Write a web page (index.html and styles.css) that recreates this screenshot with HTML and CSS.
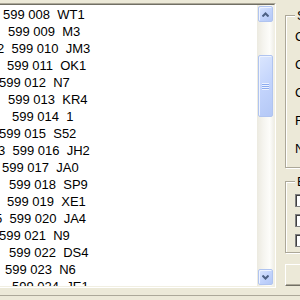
FILE: index.html
```html
<!DOCTYPE html>
<html lang="en">
<head>
  <meta charset="UTF-8">
  <title>Log viewer</title>
  <link rel="stylesheet" href="styles.css">
</head>
<body>
  <div class="window">
    <div class="main">
      <div class="listbox">
        <div class="listbox-inner">
          <div class="rows">
            <div class="row off-3">599 008  WT1</div>
            <div class="row off-8">599 009  M3</div>
            <div class="row off-n3">2  599 010  JM3</div>
            <div class="row off-7">599 011  OK1</div>
            <div class="row off-n1">599 012  N7</div>
            <div class="row off-8">599 013  KR4</div>
            <div class="row off-12">599 014  1</div>
            <div class="row off-n1">599 015  S52</div>
            <div class="row off-n2">3  599 016  JH2</div>
            <div class="row off-2">599 017  JA0</div>
            <div class="row off-9">599 018  SP9</div>
            <div class="row off-7">599 019  XE1</div>
            <div class="row off-n5">5  599 020  JA4</div>
            <div class="row off-n1">599 021  N9</div>
            <div class="row off-9">599 022  DS4</div>
            <div class="row off-5">599 023  N6</div>
            <div class="row off-12">599 024  JE1</div>
          </div>
          <div class="vscroll">
            <div class="sb-btn">
              <svg width="7" height="5" viewBox="0 0 7 5"><polyline points="0.5,4.5 3.5,1.5 6.5,4.5" fill="none" stroke="#4d6185" stroke-width="2"/></svg>
            </div>
            <div class="sb-thumb"><span class="grip"></span></div>
            <div class="sb-btn sb-down">
              <svg width="7" height="5" viewBox="0 0 7 5"><polyline points="0.5,0.5 3.5,3.5 6.5,0.5" fill="none" stroke="#4d6185" stroke-width="2"/></svg>
            </div>
          </div>
        </div>
      </div>

      <div class="side">
        <fieldset class="group">
          <legend>Search</legend>
          <div class="field">Call</div>
          <div class="field">Country</div>
          <div class="field">Continent</div>
          <div class="field">Frequency</div>
          <div class="field">Name</div>
        </fieldset>
        <fieldset class="group group-export">
          <legend>Export</legend>
          <label class="check"><span class="box"></span>ADIF</label>
          <label class="check"><span class="box"></span>Cabrillo</label>
          <label class="check"><span class="box"></span>CSV</label>
        </fieldset>
        <button class="btn">Save</button>
      </div>
    </div>
    <div class="status"></div>
  </div>
</body>
</html>
```

FILE: styles.css
```css
* {
  margin: 0;
  padding: 0;
  box-sizing: border-box;
}

html,
body {
  overflow: hidden;
}

body {
  font-family: 'Liberation Sans', Arial, sans-serif;
  font-size: 13px;
  color: #000;
  background: #ece9d8;
}

.window {
  width: 300px;
  height: 300px;
  overflow: hidden;
}

.main {
  display: flex;
  align-items: flex-start;
  height: 288px;
}

/* list box, left edge scrolled off screen */
.listbox {
  flex-shrink: 0;
  width: 278px;
  height: 285px;
  margin-top: 3px;
  margin-left: -2px;
  border: 1px solid;
  border-color: #aca899 #fff #fff #aca899;
}

.listbox-inner {
  display: flex;
  height: 100%;
  border: 1px solid;
  border-color: #716f64 #f1efe2 #f1efe2 #716f64;
}

.rows {
  flex: 1;
  overflow: hidden;
  background: #fff;
  padding-top: 1px;
}

.row {
  height: 17px;
  line-height: 17px;
  white-space: pre;
}

/* horizontal offset of each line (hidden leading column) */
.off-n5 { text-indent: -5px; }
.off-n3 { text-indent: -3px; }
.off-n2 { text-indent: -2px; }
.off-n1 { text-indent: -1px; }
.off-2 { text-indent: 2px; }
.off-3 { text-indent: 3px; }
.off-5 { text-indent: 5px; }
.off-7 { text-indent: 7px; }
.off-8 { text-indent: 8px; }
.off-9 { text-indent: 9px; }
.off-12 { text-indent: 12px; }

/* XP style scroll bar */
.vscroll {
  width: 17px;
  display: flex;
  flex-direction: column;
  background: linear-gradient(to right, #eceae0, #f6f5f0 40%, #fdfdfa 75%, #efeee7);
}

.sb-btn,
.sb-thumb {
  margin: 1px 0 0 1px;
  width: 15px;
  border: 1px solid #b0c4f0;
  border-radius: 2px;
  background: linear-gradient(135deg, #dbe6fe, #c3d4fc 50%, #b4c8f6);
  box-shadow: inset 1px 1px 0 #eef3fe;
}

.sb-btn {
  height: 16px;
  display: flex;
  align-items: center;
  justify-content: center;
}

.sb-thumb {
  height: 62px;
  margin-top: 33px;
  display: flex;
  align-items: center;
  justify-content: center;
}

.grip {
  display: block;
  width: 7px;
  height: 7px;
  background: repeating-linear-gradient(to bottom, #eef3fe 0 1px, #8cacf0 1px 2px);
}

.sb-down {
  margin-top: auto;
  margin-bottom: 1px;
}

/* right hand panel */
.side {
  flex-shrink: 0;
  width: 160px;
  margin-left: 9px;
  padding-top: 8px;
  display: flex;
  flex-direction: column;
  align-items: flex-start;
}

.group {
  width: 150px;
  margin: 0;
  padding: 0 0 4px 9px;
  border: 1px solid #aca899;
  box-shadow: inset 1px 1px 0 #fff, 1px 1px 0 #fff;
  min-inline-size: 0;
}

.group legend {
  padding: 0 2px;
  line-height: 15px;
  background: #ece9d8;
}

.field {
  height: 28px;
  line-height: 28px;
}

.group-export {
  margin-top: 6px;
  padding-top: 2px;
  padding-bottom: 1px;
}

.check {
  display: flex;
  align-items: flex-start;
  gap: 5px;
  height: 20px;
  line-height: 19px;
}

.box {
  width: 13px;
  height: 13px;
  margin-top: 3px;
  border: 1px solid #808080;
  box-shadow: inset 1px 1px 0 #404040;
  background: #fff;
}

.btn {
  margin-top: 11px;
  width: 75px;
  height: 22px;
  font: inherit;
  background: #ece9d8;
  border: 1px solid;
  border-color: #fff #716f64 #716f64 #fff;
  box-shadow: inset -1px -1px 0 #aca899;
}

.status {
  margin-top: 7px;
  height: 5px;
  border-top: 1px solid #aca899;
}
```
